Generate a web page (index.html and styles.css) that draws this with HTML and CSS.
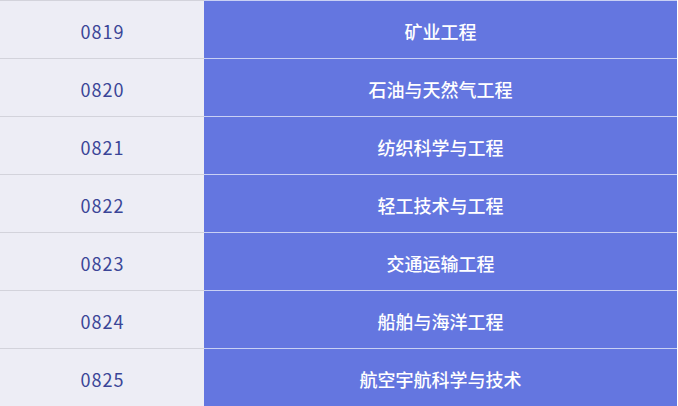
FILE: index.html
```html
<!DOCTYPE html>
<html lang="zh">
<head>
<meta charset="utf-8">
<link rel="stylesheet" href="styles.css">
</head>
<body>
<div class="table">
  <div class="row"><div class="code">0819</div><div class="name">矿业工程</div></div>
  <div class="row"><div class="code">0820</div><div class="name">石油与天然气工程</div></div>
  <div class="row"><div class="code">0821</div><div class="name">纺织科学与工程</div></div>
  <div class="row"><div class="code">0822</div><div class="name">轻工技术与工程</div></div>
  <div class="row"><div class="code">0823</div><div class="name">交通运输工程</div></div>
  <div class="row"><div class="code">0824</div><div class="name">船舶与海洋工程</div></div>
  <div class="row"><div class="code">0825</div><div class="name">航空宇航科学与技术</div></div>
</div>
</body>
</html>
```
FILE: styles.css
```css
html, body {
  margin: 0;
  padding: 0;
  background: #ffffff;
  overflow: hidden;
}
.table {
  width: 677px;
  font-family: "Microsoft YaHei", "Noto Sans CJK SC", "Noto Sans", sans-serif;
  font-size: 18px;
}
.row {
  display: grid;
  grid-template-columns: 204px 1fr;
  height: 57px;
  border-top: 1px solid transparent;
}
.code, .name {
  display: flex;
  align-items: center;
  justify-content: center;
  padding-top: 2px;
  box-sizing: border-box;
}
.code {
  background: #ededf5;
  color: #3a4597;
  border-top: 1px solid #d3d3db;
  margin-top: -1px;
  height: 58px;
  letter-spacing: 1px;
  padding-left: 1px;
}
.name {
  background: #6476e0;
  color: #ffffff;
  border-top: 1px solid #c9d0f4;
  margin-top: -1px;
  height: 58px;
  font-weight: 500;
}
```
